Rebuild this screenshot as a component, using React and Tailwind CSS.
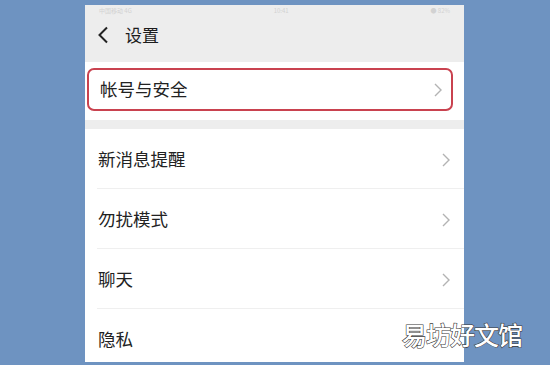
import React from "react";

const rows = ["新消息提醒", "勿扰模式", "聊天", "隐私"];

function Chevron({ className = "" }) {
  return (
    <svg width="8" height="14" viewBox="0 0 8 14" className={className}>
      <path d="M1 1l6 6-6 6" fill="none" stroke="#b3b3b3" strokeWidth="1.4" />
    </svg>
  );
}

export default function App() {
  return (
    <div
      className="relative w-[550px] h-[365px] overflow-hidden bg-[#6e93c1] pl-[85px] pt-[5px]"
      style={{ fontFamily: '"Noto Sans CJK SC", "Noto Sans", sans-serif' }}
    >
      <div className="w-[379px] h-[357px] bg-white flex flex-col overflow-hidden">
        {/* header */}
        <div className="shrink-0 h-[57px] bg-[#ededed] relative flex items-center pl-[12px] pt-[3px]">
          <div className="absolute top-[1px] left-0 right-0 flex justify-between px-[14px] text-[6px] text-[#d2d2d2] leading-[9px]">
            <span>中国移动 4G</span>
            <span>10:41</span>
            <span>● 82%</span>
          </div>
          <svg width="12" height="18" viewBox="0 0 12 18">
            <path d="M10 1.5L2.5 9l7.5 7.5" fill="none" stroke="#222" strokeWidth="2" />
          </svg>
          <span className="ml-[16px] text-[17px] text-[#1c1c1c]">设置</span>
        </div>

        {/* account */}
        <div className="shrink-0 h-[58px] bg-white pl-[2px] pr-[11px] pt-[6px]">
          <div className="h-[43px] border-2 border-[#c9424f] rounded-[7px] flex items-center justify-between pl-[11px] pr-[9px]">
            <span className="text-[17.5px] text-[#222]">帐号与安全</span>
            <Chevron />
          </div>
        </div>

        <div className="shrink-0 h-[9px] bg-[#ededed]" />

        {rows.map((r, i) => (
          <div key={r} className="shrink-0">
            <div className="h-[59px] flex items-center justify-between pl-[13px] pr-[14px] pt-[2px]">
              <span className="text-[17.5px] text-[#222]">{r}</span>
              {i < 3 && <Chevron />}
            </div>
            <div className="h-px ml-[12px] bg-[#efefef]" />
          </div>
        ))}
      </div>

      <div className="absolute left-[402px] top-[322px] text-[25px] font-medium leading-none text-white tracking-[-1px] [-webkit-text-stroke:1.2px_#3a3a3a] [paint-order:stroke_fill]">
        易坊好文馆
      </div>
    </div>
  );
}
